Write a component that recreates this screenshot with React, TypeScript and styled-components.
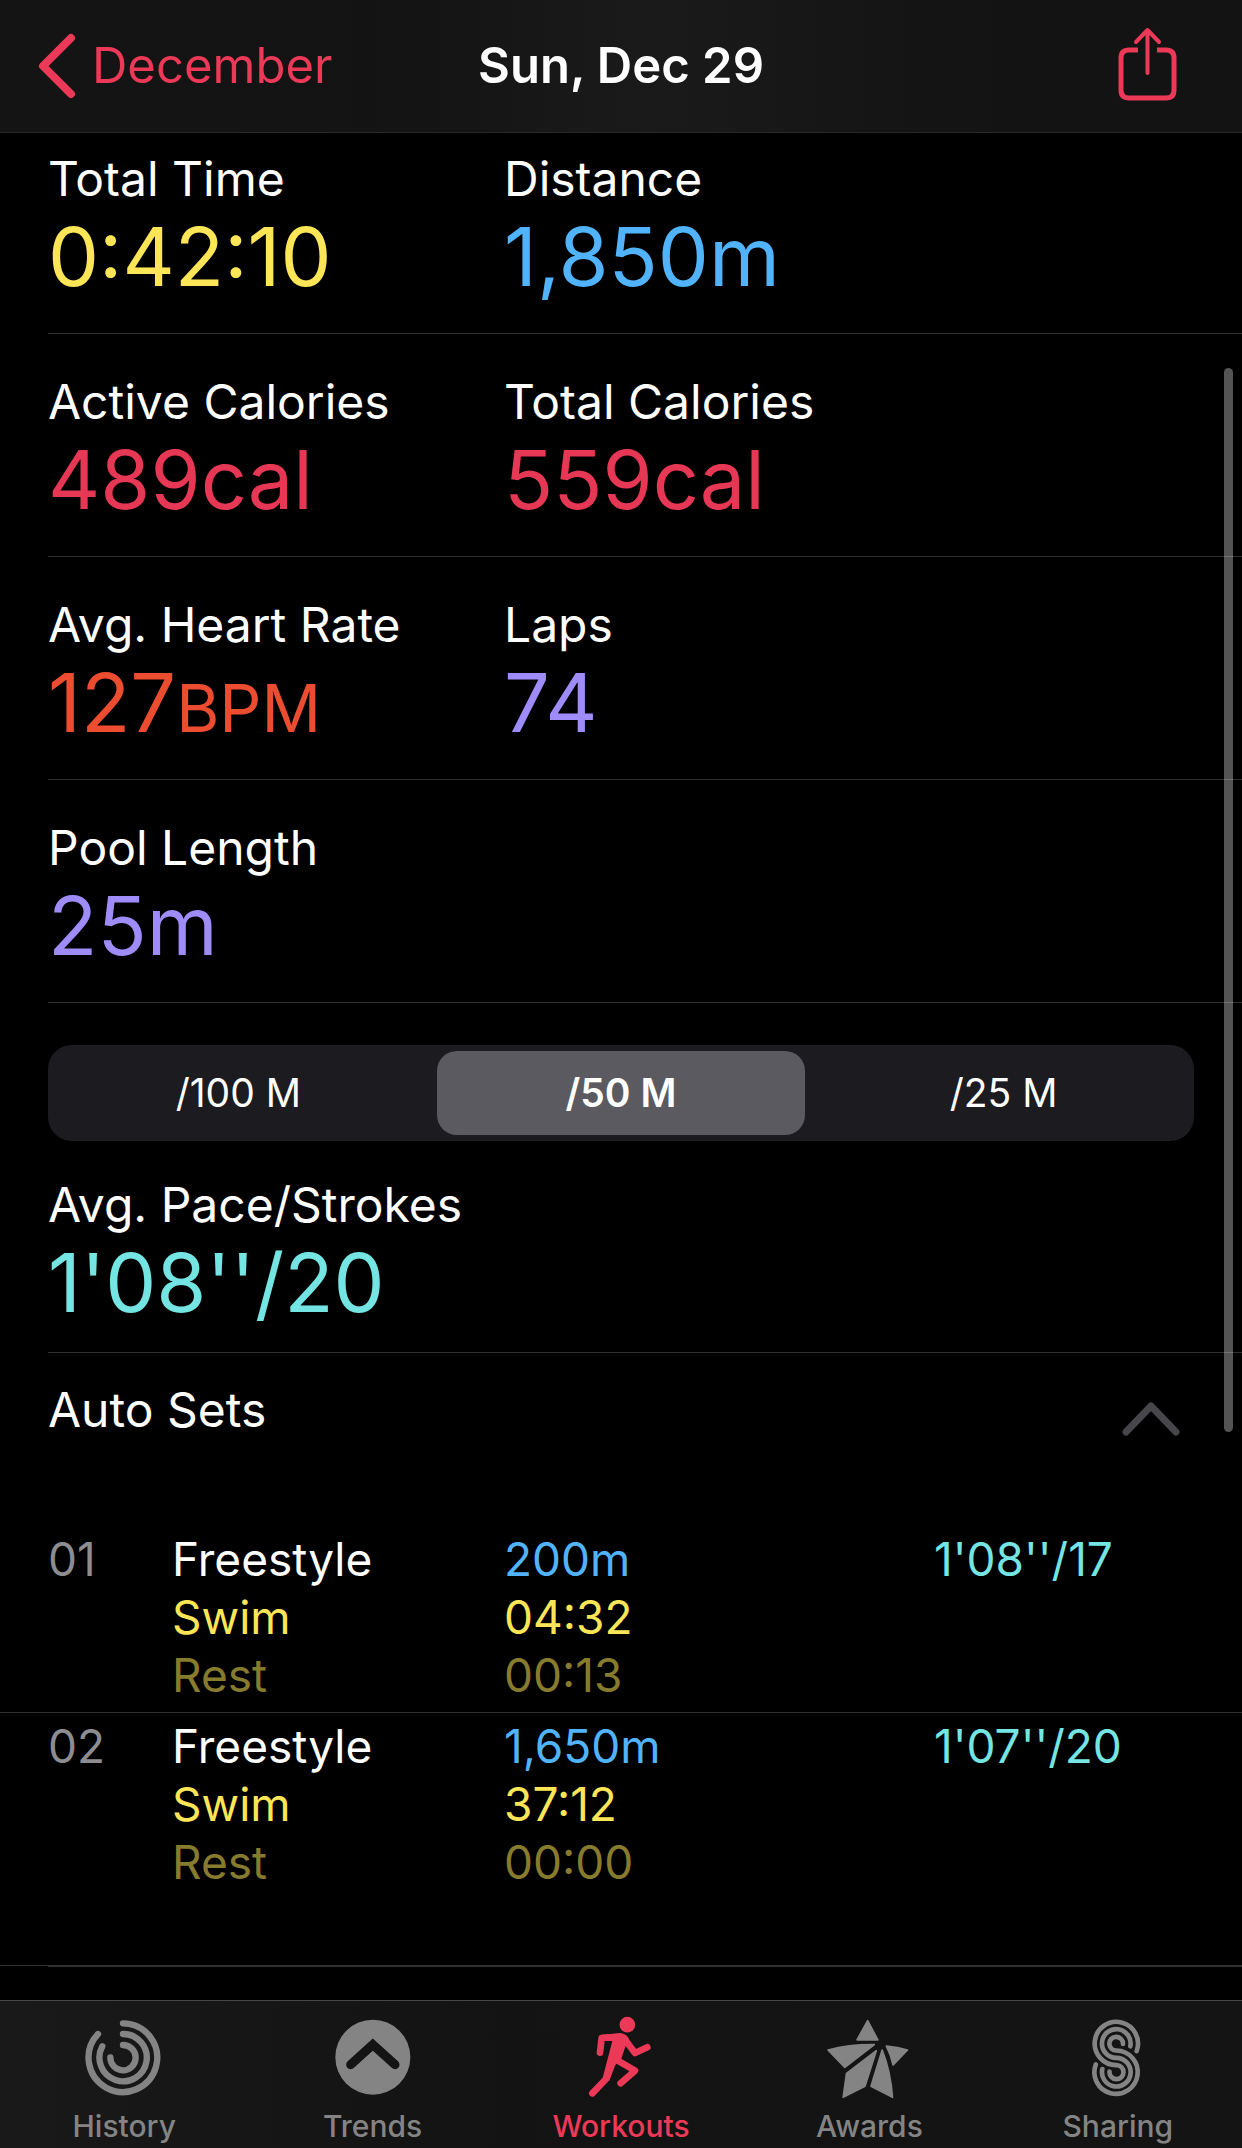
import React, { useState } from "react";
import styled, { createGlobalStyle } from "styled-components";

const color = {
  pink: "#ec3958",
  crimson: "#e63754",
  yellow: "#fce657",
  olive: "#877b2d",
  blue: "#50b3fb",
  orange: "#ec4c2f",
  violet: "#9f8cf8",
  teal: "#74e5e2",
  gray: "#8c8c91",
  tabGray: "#848484",
  line: "#303032",
};

const GlobalStyle = createGlobalStyle`
  *, *::before, *::after { box-sizing: border-box; }
  body {
    margin: 0;
    background: #000;
    color: #fff;
    font-family: Inter, Roboto, "Liberation Sans", sans-serif;
  }
  button { font: inherit; border: 0; background: none; padding: 0; cursor: pointer; }
  a { text-decoration: none; }
`;

const Page = styled.div`
  display: flex;
  flex-direction: column;
  min-height: 100vh;
`;

const Header = styled.header`
  display: grid;
  grid-template-columns: 1fr auto 1fr;
  align-items: center;
  height: 133px;
  padding: 0 62px 0 34px;
  background: linear-gradient(90deg, #141414 0%, #131313 30%, #1a1a1a 52%, #131313 80%);
  border-bottom: 1px solid #2a2a2b;
`;

const BackLink = styled.a`
  display: flex;
  align-items: center;
  gap: 14px;
  color: ${color.pink};
  font-size: 49px;
  line-height: 60px;
`;

const Title = styled.h1`
  margin: 0;
  padding-left: 28px;
  font-size: 49px;
  line-height: 60px;
  font-weight: 600;
`;

const ShareButton = styled.button`
  display: flex;
  justify-self: end;
  color: ${color.pink};
`;

const Main = styled.main`
  position: relative;
  flex: 1;
`;

const ScrollThumb = styled.div`
  position: absolute;
  top: 235px;
  right: 9px;
  width: 9px;
  height: 1064px;
  border-radius: 5px;
  background: rgba(255, 255, 255, 0.33);
`;

const StatRow = styled.dl<{ $first?: boolean; $last?: boolean }>`
  display: grid;
  grid-template-columns: minmax(0, 456px) 1fr;
  margin: 0 0 0 48px;
  padding: ${(p) => (p.$first ? 16 : p.$last ? 34 : 38)}px 0 ${(p) => (p.$last ? 21 : 28)}px;
  border-bottom: 1px solid ${color.line};
`;

const StatLabel = styled.dt`
  font-size: 48px;
  line-height: 60px;
  white-space: nowrap;
`;

const StatValue = styled.dd<{ $color: string }>`
  margin: 0;
  font-size: 81px;
  line-height: 96px;
  font-weight: 400;
  white-space: nowrap;
  color: ${(p) => p.$color};
`;

const Unit = styled.span`
  font-size: 66px;
  line-height: 1;
`;

const Segments = styled.fieldset`
  display: grid;
  grid-template-columns: repeat(3, 1fr);
  gap: 14px;
  margin: 42px 48px 0;
  padding: 6px;
  border: 0;
  border-radius: 24px;
  background: #1c1b20;
`;

const Segment = styled.label`
  display: block;
  border-radius: 20px;
  font-size: 39px;
  line-height: 84px;
  font-weight: 400;
  text-align: center;
  cursor: pointer;

  &:has(input:checked) {
    background: #5b5a60;
    font-weight: 600;
  }
`;

const HiddenRadio = styled.input`
  position: absolute;
  opacity: 0;
  width: 1px;
  height: 1px;
  margin: 0;
`;

const SetsToggle = styled.button`
  display: flex;
  justify-content: space-between;
  width: 100%;
  padding: 27px 58px 86px 48px;
  color: #fff;
  font-size: 48px;
  line-height: 60px;
  text-align: left;
`;

const ToggleIcon = styled.svg<{ $open: boolean }>`
  align-self: end;
  color: #47464b;
  transform: ${(p) => (p.$open ? "none" : "rotate(180deg)")};
`;

const SetTable = styled.table`
  width: 100%;
  table-layout: fixed;
  border-collapse: separate;
  border-spacing: 0;
  font-size: 46px;
  line-height: 58px;

  th, td {
    padding: 4px 0 8px;
    border-bottom: 1px solid ${color.line};
    font-weight: 400;
    text-align: left;
    vertical-align: top;
    white-space: nowrap;
  }
  th { padding-left: 48px; color: ${color.gray}; }
  tr:last-child > * { padding-bottom: 74px; }
`;

const Col = styled.col<{ $width?: number }>`
  width: ${(p) => (p.$width ? `${p.$width}px` : "auto")};
`;

const Line = styled.div<{ $color?: string }>`
  color: ${(p) => p.$color ?? "#fff"};
`;

const EndRule = styled.hr`
  margin: 0 0 32px 48px;
  border: 0;
  border-top: 1px solid ${color.line};
`;

const TabBar = styled.nav`
  display: grid;
  grid-template-columns: repeat(5, 1fr);
  padding: 15px 0 4px;
  border-top: 1px solid #474747;
  background: linear-gradient(90deg, #191919 0%, #131313 40%, #141414 100%);
`;

const Tab = styled.a<{ $active?: boolean }>`
  display: flex;
  flex-direction: column;
  align-items: center;
  gap: 8px;
  color: ${(p) => (p.$active ? color.pink : color.tabGray)};
  font-size: 30px;
  line-height: 36px;
  font-weight: 500;
`;

const stroke = {
  fill: "none",
  stroke: "currentColor",
  strokeLinecap: "round" as const,
  strokeLinejoin: "round" as const,
};

const HistoryIcon = () => (
  <svg width="84" height="84" viewBox="66 109 252 252" aria-hidden="true">
    <g {...stroke} strokeWidth="19">
      <path d="M189 131A103 103 0 1 1 114 163" />
      <path d="M189 163A71 71 0 1 1 127 200" />
      <path d="M189 196A38 38 0 1 1 151 233" />
    </g>
  </svg>
);

const TrendsIcon = () => (
  <svg width="84" height="84" viewBox="812 109 252 252" aria-hidden="true">
    <circle cx="937.5" cy="232.5" r="112.5" fill="currentColor" />
    <path d="M871 255L937.5 195L1004 255" fill="none" stroke="#141414" strokeWidth="27" strokeLinecap="round" />
  </svg>
);

const WorkoutsIcon = () => (
  <svg width="84" height="84" viewBox="177 109 252 252" aria-hidden="true">
    <circle cx="322" cy="135" r="23.5" fill="currentColor" />
    <path
      d="M244 165L302 161Q318 162 327 178L317 198L304 237L286 256L268 303L247 298L277 184L246 184Z"
      fill="currentColor"
    />
    <g {...stroke} strokeWidth="20">
      <path d="M240 219L245 175L300 171" />
      <path d="M312 176L345 220L382 203" />
      <path d="M292 242L345 273L302 311" />
      <path d="M258 298L217 341" />
    </g>
  </svg>
);

const AwardsIcon = () => (
  <svg width="84" height="84" viewBox="112 109 252 252" aria-hidden="true">
    <g fill="currentColor" stroke="currentColor" strokeWidth="5" strokeLinejoin="round">
      <path d="M234 123L264.5 180.5H202Z" />
      <path d="M115 211Q180 194 254 195L165.5 263Z" />
      <path d="M260 213L226 320L160.5 353L170.5 281Z" />
      <path d="M277.5 211Q303 275 308.5 353L244 319.5Z" />
      <path d="M290 199.5Q325 203 353.5 211L310.5 256Q303 224 290 199.5Z" />
    </g>
  </svg>
);

const SharingIcon = () => (
  <svg width="84" height="84" viewBox="107 229 252 252" aria-hidden="true">
    <g {...stroke} strokeWidth="14">
      <path d="M289 334A65 65 0 1 0 228 376.5A21 21 0 1 1 207.5 396" />
      <path d="M270 320A43 43 0 1 0 228 354.5A43 43 0 1 1 186 388" />
      <path d="M248 313A20.5 20.5 0 1 0 228 332.5A65 65 0 1 1 166.5 374" />
    </g>
  </svg>
);

const stats = [
  [
    { label: "Total Time", value: "0:42:10", tint: color.yellow },
    { label: "Distance", value: "1,850m", tint: color.blue },
  ],
  [
    { label: "Active Calories", value: "489cal", tint: color.crimson },
    { label: "Total Calories", value: "559cal", tint: color.crimson },
  ],
  [
    { label: "Avg. Heart Rate", value: "127", unit: "BPM", tint: color.orange },
    { label: "Laps", value: "74", tint: color.violet },
  ],
  [{ label: "Pool Length", value: "25m", tint: color.violet }],
];

const sets = [
  { id: "01", stroke: "Freestyle", distance: "200m", swim: "04:32", rest: "00:13", pace: "1'08''/17" },
  { id: "02", stroke: "Freestyle", distance: "1,650m", swim: "37:12", rest: "00:00", pace: "1'07''/20" },
];

const tabs = [
  { name: "History", Icon: HistoryIcon },
  { name: "Trends", Icon: TrendsIcon },
  { name: "Workouts", Icon: WorkoutsIcon },
  { name: "Awards", Icon: AwardsIcon },
  { name: "Sharing", Icon: SharingIcon },
];

const splits = ["/100 M", "/50 M", "/25 M"];

export default function App() {
  const [split, setSplit] = useState("/50 M");
  const [open, setOpen] = useState(true);

  return (
    <Page>
      <GlobalStyle />
      <Header>
        <BackLink href="#december">
          <svg width="44" height="68" viewBox="0 0 44 68" aria-hidden="true">
            <path d="M37 6L9 34L37 62" {...stroke} strokeWidth="8" />
          </svg>
          December
        </BackLink>
        <Title>Sun, Dec 29</Title>
        <ShareButton type="button" aria-label="Share">
          <svg width="64" height="80" viewBox="1116 26 64 80" aria-hidden="true">
            <g {...stroke} strokeWidth="5">
              <path d="M1138 50H1129Q1121 50 1121 58V90Q1121 98 1129 98H1166Q1174 98 1174 90V58Q1174 50 1166 50H1157" strokeLinecap="butt" />
              <path d="M1147.5 73V31M1136 42L1147.5 30L1159 42" strokeWidth="4" />
            </g>
          </svg>
        </ShareButton>
      </Header>

      <Main>
        {stats.map((row, i) => (
          <StatRow key={i} $first={i === 0}>
            {row.map((s) => (
              <div key={s.label}>
                <StatLabel>{s.label}</StatLabel>
                <StatValue $color={s.tint}>
                  {s.value}
                  {"unit" in s && <Unit>{s.unit}</Unit>}
                </StatValue>
              </div>
            ))}
          </StatRow>
        ))}

        <Segments aria-label="Split distance">
          {splits.map((name) => (
            <Segment key={name}>
              <HiddenRadio
                type="radio"
                name="split"
                value={name}
                checked={split === name}
                onChange={() => setSplit(name)}
              />
              {name}
            </Segment>
          ))}
        </Segments>

        <StatRow $last>
          <div>
            <StatLabel>Avg. Pace/Strokes</StatLabel>
            <StatValue $color={color.teal}>1'08''/20</StatValue>
          </div>
        </StatRow>

        <SetsToggle type="button" aria-expanded={open} onClick={() => setOpen(!open)}>
          Auto Sets
          <ToggleIcon $open={open} width="66" height="42" viewBox="0 0 66 42" aria-hidden="true">
            <path d="M8 34L33 8L58 34" {...stroke} strokeWidth="7" />
          </ToggleIcon>
        </SetsToggle>

        {open && (
          <SetTable aria-label="Auto Sets">
            <colgroup>
              <Col $width={172} />
              <Col $width={332} />
              <Col $width={430} />
              <Col />
            </colgroup>
            <tbody>
              {sets.map((s) => (
                <tr key={s.id}>
                  <th scope="row">{s.id}</th>
                  <td>
                    <Line>{s.stroke}</Line>
                    <Line $color={color.yellow}>Swim</Line>
                    <Line $color={color.olive}>Rest</Line>
                  </td>
                  <td>
                    <Line $color={color.blue}>{s.distance}</Line>
                    <Line $color={color.yellow}>{s.swim}</Line>
                    <Line $color={color.olive}>{s.rest}</Line>
                  </td>
                  <td>
                    <Line $color={color.teal}>{s.pace}</Line>
                  </td>
                </tr>
              ))}
            </tbody>
          </SetTable>
        )}
        <EndRule />
        <ScrollThumb />
      </Main>

      <TabBar aria-label="Main">
        {tabs.map(({ name, Icon }) => (
          <Tab
            key={name}
            href={`#${name.toLowerCase()}`}
            $active={name === "Workouts"}
            aria-current={name === "Workouts" ? "page" : undefined}
          >
            <Icon />
            {name}
          </Tab>
        ))}
      </TabBar>
    </Page>
  );
}
